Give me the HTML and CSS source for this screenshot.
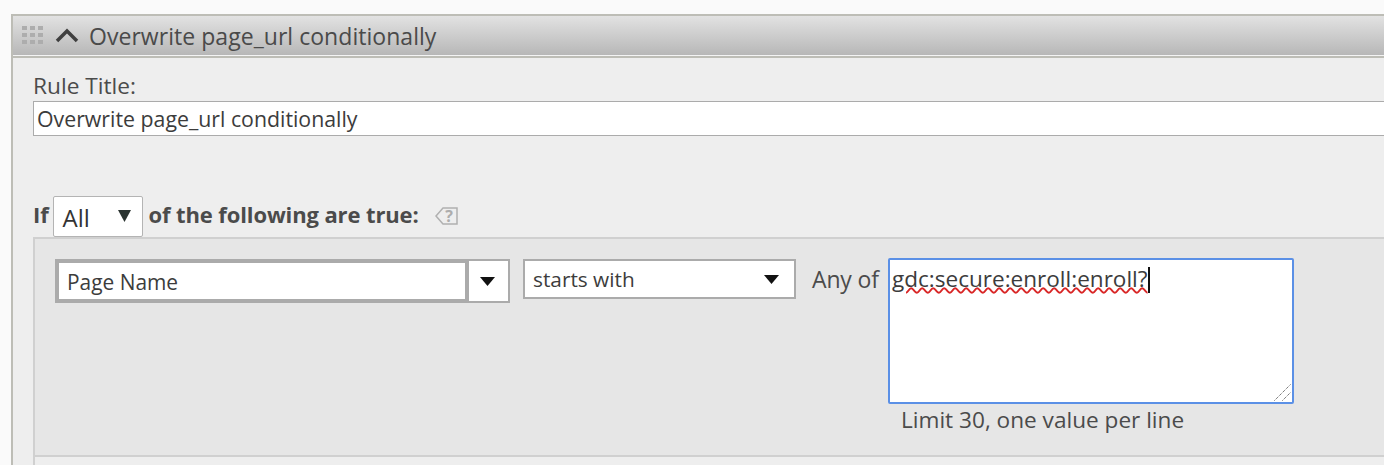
FILE: index.html
```html
<!DOCTYPE html>
<html lang="en">
<head>
<meta charset="utf-8">
<title>Rule</title>
<link rel="stylesheet" href="styles.css">
</head>
<body>
<section class="rule">
  <header class="rule-head">
    <svg class="grip" width="22" height="20" viewBox="0 0 22 20"><g fill="#adadad"><rect x="0" y="0" width="5" height="4"/><rect x="8" y="0" width="5" height="4"/><rect x="16" y="0" width="5" height="4"/><rect x="0" y="7" width="5" height="4"/><rect x="8" y="7" width="5" height="4"/><rect x="16" y="7" width="5" height="4"/><rect x="0" y="14" width="5" height="4"/><rect x="8" y="14" width="5" height="4"/><rect x="16" y="14" width="5" height="4"/></g></svg>
    <svg class="chev" width="24" height="15" viewBox="0 0 24 15"><path d="M2 13 L12 3 L22 13" fill="none" stroke="#3f3f3f" stroke-width="3.500"/></svg>
    <span class="rule-name">Overwrite page_url conditionally</span>
  </header>
  <div class="rule-body">
    <label class="field-label">Rule Title:</label>
    <div class="title-input">Overwrite page_url conditionally</div>
    <div class="if-row">
      <span class="strong">If</span>
      <div class="all-select"><span>All</span><svg width="13" height="12" viewBox="0 0 13 12"><path d="M0 0H13L6.500 12Z" fill="#2a3330"/></svg></div>
      <span class="strong">of the following are true:</span>
      <svg class="tag" width="25" height="22" viewBox="0 0 25 22"><path d="M23 3H9L2 11L9 19H23Z" fill="none" stroke="#b0b0b0" stroke-width="1.500"/><text x="15" y="17" class="tag-q">?</text></svg>
    </div>
    <div class="conditions">
      <div class="cond-row">
        <div class="combo">
          <div class="combo-input">Page Name</div>
          <div class="combo-btn"><svg class="arrow" width="15" height="9" viewBox="0 0 15 9"><path d="M0 0H15L7.500 9Z" fill="#111"/></svg></div>
        </div>
        <div class="op-select"><span>starts with</span><svg class="arrow" width="15" height="9" viewBox="0 0 15 9"><path d="M0 0H15L7.500 9Z" fill="#111"/></svg></div>
        <span class="any-of">Any of</span>
        <div class="value-col">
          <div class="value-box"><span class="misspelt">gdc:secure:enroll:enroll?</span><span class="caret"></span>
            <svg class="resize" width="17" height="17" viewBox="0 0 17 17"><path d="M0.500 16.500L16.500 0.500M8.500 16.500L16.500 8.500" stroke="#444" stroke-width="1" stroke-dasharray="1 1" fill="none"/></svg>
          </div>
          <div class="hint">Limit 30, one value per line</div>
        </div>
      </div>
    </div>
    <div class="after"></div>
  </div>
</section>
</body>
</html>
```
FILE: styles.css
```css
* { box-sizing: border-box; }
html, body { margin: 0; height: 465px; overflow: hidden; }
body {
  background: #fafafa;
  font-family: "Open Sans", "Noto Sans", sans-serif;
  font-size: 22px;
  color: #4b4b4b;
  padding: 14px 0 0 11px;
}
.rule {
  width: 1373px;
  height: 451px;
  border: 2px solid #bdbdb6;
  border-right: 0;
  border-bottom: 0;
  background: #eeeeee;
  overflow: hidden;
}
.rule-head {
  height: 42px;
  display: flex;
  align-items: center;
  background: linear-gradient(#e2e2e2, #b6b6b6);
  border-bottom: 2px solid #bdbdb6;
  box-shadow: 0 -1px 0 #f4f4f4 inset;
}
.grip { margin: 0 0 0 9px; }
.chev { margin: -2px 0 0 11px; }
.rule-name { margin-left: 10px; font-size: 23px; letter-spacing: 0.04px; color: #4a4a4a; }
.rule-body { padding: 13px 0 0 20px; }
.field-label { display: block; line-height: 30px; font-size: 22.7px; color: #4b4b4b; }
.title-input {
  height: 35px;
  margin-right: -10px;
  line-height: 33px;
  background: #fff;
  border: 1px solid #ababab;
  padding-left: 3px;
  font-size: 21.3px;
  color: #3c3c3c;
}
.if-row {
  display: flex;
  align-items: center;
  margin-top: 60px;
  height: 42px;
}
.strong { font-weight: 700; color: #4b4b4b; font-size: 22px; letter-spacing: -0.12px; position: relative; top: -3px; }
.all-select {
  width: 90px;
  height: 41px;
  margin: -1px 6px 0 4px;
  background: #fff;
  border: 1px solid #b4b4b4;
  border-radius: 2px;
  display: flex;
  align-items: center;
  justify-content: space-between;
  padding: 0 11px 0 9px;
  color: #333;
  font-size: 24px;
}
.all-select svg { margin-top: -2px; }
.all-select span { padding-top: 2px; }
.tag { margin-left: 15px; margin-top: -2px; }
.tag-q { font-size: 16px; font-weight: 700; fill: #adadad; text-anchor: middle; }
.conditions {
  margin-top: -1px;
  height: 220px;
  background: #e6e6e6;
  border: 2px solid #d0d0d0;
  border-right: 0;
  padding: 19px 0 0 20px;
}
.cond-row { display: flex; align-items: flex-start; }
.combo { width: 455px; height: 44px; display: flex; margin-top: 1px; }
.combo-input {
  width: 414px;
  height: 44px;
  background: #fff;
  border: 4px solid #ababab;
  padding-left: 8px;
  line-height: 38px;
  font-size: 20.9px;
  color: #3c3c3c;
}
.combo-btn {
  width: 41px;
  height: 44px;
  background: #fff;
  border: 2px solid #ababab;
  border-left: 0;
  display: flex;
  align-items: center;
  justify-content: center;
  padding-right: 2px;
}
.op-select {
  width: 273px;
  height: 40px;
  margin: 1px 0 0 13px;
  background: #fff;
  border: 2px solid #ababab;
  display: flex;
  align-items: center;
  justify-content: space-between;
  padding: 0 15px 0 8px;
  font-size: 20.8px;
  color: #3c3c3c;
}
.any-of { margin: 5px 0 0 16px; width: 76px; white-space: nowrap; font-size: 23px; letter-spacing: -0.15px; }
.value-col { width: 406px; }
.value-box {
  position: relative;
  height: 146px;
  background: #fff;
  border: 2px solid #5b90e6;
  border-radius: 2px;
  padding: 4px 0 0 2px;
  line-height: 30px;
  font-size: 22.55px;
  color: #3c3c3c;
  display: flex;
  align-items: flex-start;
}
.misspelt {
  text-decoration: underline wavy #d92626 1.5px;
  text-underline-offset: 0;
}
.caret { width: 2px; height: 26px; margin-top: 3px; background: #111; }
.resize { position: absolute; right: 1px; bottom: 1px; }
.hint { margin: 1px 0 0 13px; line-height: 30px; font-size: 22.6px; white-space: nowrap; }
.after { height: 20px; border-left: 2px solid #d0d0d0; background: #eeeeee; }
```
